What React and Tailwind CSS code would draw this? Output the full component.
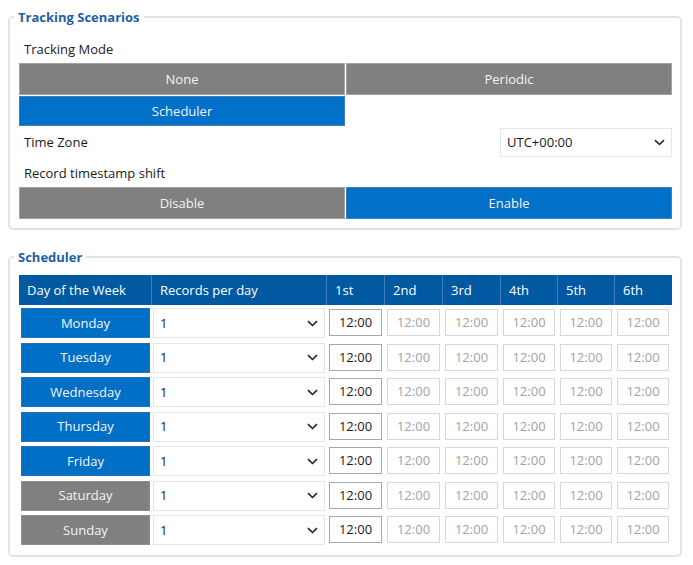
import React from 'react';

const days = [
  { name: 'Monday', active: true },
  { name: 'Tuesday', active: true },
  { name: 'Wednesday', active: true },
  { name: 'Thursday', active: true },
  { name: 'Friday', active: true },
  { name: 'Saturday', active: false },
  { name: 'Sunday', active: false },
];

const slots = ['1st', '2nd', '3rd', '4th', '5th', '6th'];

const Chevron = () => (
  <svg width="11" height="7" viewBox="0 0 11 7" className="shrink-0">
    <path d="M1 1.2 L5.5 5.5 L10 1.2" fill="none" stroke="#222" strokeWidth="1.6" />
  </svg>
);

const Select = ({ value, className }) => (
  <div className={`flex items-center justify-between bg-white border border-[#e3e6ea] pl-[6px] pr-[6px] text-[#1a1a1a] ${className}`}>
    <span>{value}</span>
    <Chevron />
  </div>
);

const ModeButton = ({ label, active, className = '' }) => (
  <div
    className={`flex items-center justify-center text-[#f4f4f4] border ${
      active ? 'bg-[#0070c8] border-[#3f7fba]' : 'bg-[#808080] border-[#a3a3a3]'
    } ${className}`}
  >
    {label}
  </div>
);

const cols = 'grid grid-cols-[132px_175px_58px_58px_58px_57px_57px_57px]';

const App = () => {
  return (
    <div className="w-[693px] h-[565px] bg-white pt-[7px] pl-[8px] text-[13px] leading-none" style={{ fontFamily: '"Open Sans", "Noto Sans", sans-serif' }}>
      <fieldset className="w-[674px] border-2 border-[#dfe4ea] rounded-[5px] pl-[9px] pr-[8px] pt-[8px] pb-[9px]">
        <legend className="-ml-[5px] px-[4px] h-[20px] font-bold text-[#1f5fa8] leading-[20px]">
          Tracking Scenarios
        </legend>
        <div className="h-[28px] flex items-center pl-[5px] text-[#1a1a1a]">Tracking Mode</div>
        <div className="grid grid-cols-2 gap-x-[1px] gap-y-[1px]">
          <ModeButton label="None" className="h-[32px]" />
          <ModeButton label="Periodic" className="h-[32px]" />
          <ModeButton label="Scheduler" active className="h-[30px]" />
        </div>
        <div className="h-[33px] flex items-center justify-between pl-[5px] text-[#1a1a1a]">
          <span>Time Zone</span>
          <Select value="UTC+00:00" className="w-[172px] h-[29px]" />
        </div>
        <div className="h-[28px] flex items-center pl-[5px] text-[#1a1a1a]">Record timestamp shift</div>
        <div className="grid grid-cols-2 gap-x-[1px]">
          <ModeButton label="Disable" className="h-[32px]" />
          <ModeButton label="Enable" active className="h-[32px]" />
        </div>
      </fieldset>

      <fieldset className="w-[674px] mt-[17px] border-2 border-[#dfe4ea] rounded-[5px] pl-[9px] pr-[8px] pt-[8px] pb-[8px]">
        <legend className="-ml-[5px] px-[4px] h-[20px] font-bold text-[#1f5fa8] leading-[20px]">
          Scheduler
        </legend>
        <div className={`${cols} h-[30px] bg-[#0059a1] text-white`}>
          {['Day of the Week', 'Records per day', ...slots].map((h, i) => (
            <div
              key={h}
              className={`flex items-center pl-[8px] ${i > 0 ? 'border-l border-[#3d7dbb]' : ''}`}
            >
              {h}
            </div>
          ))}
        </div>
        {days.map((d) => (
          <div key={d.name} className={`${cols} h-[34.5px] items-start pt-[3px]`}>
            <div className="pl-[2px] pr-[1px]">
              <div
                className={`h-[30px] flex items-center justify-center text-[#f4f4f4] border ${
                  d.active ? 'bg-[#0070c6] border-[#2a6fb0]' : 'bg-[#808080] border-[#8e8e8e]'
                }`}
              >
                {d.name}
              </div>
            </div>
            <div className="pl-[2px] pr-[1px]">
              <Select value="1" className="h-[30px]" />
            </div>
            {slots.map((s, i) => (
              <div key={s} className="pl-[3px] pr-[2px] pt-[1px]">
                <div
                  className={`h-[27px] flex items-center justify-center bg-white border ${
                    i === 0 ? 'border-[#a8a8a8] text-[#1a1a1a]' : 'border-[#d8d8d8] text-[#a3a3a3]'
                  }`}
                >
                  12:00
                </div>
              </div>
            ))}
          </div>
        ))}
      </fieldset>
    </div>
  );
};

export default App;
